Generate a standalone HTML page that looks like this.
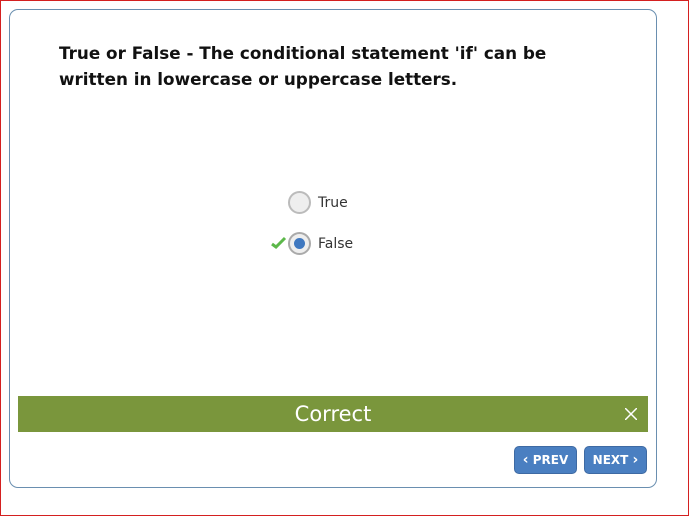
<!DOCTYPE html>
<html><head><style>
body{margin:0;width:689px;height:516px;background:#fff;position:relative;overflow:hidden;font-family:"Liberation Sans","DejaVu Sans",sans-serif}
.frame{position:absolute;left:0;top:0;width:687px;height:514px;border:1px solid #d42020}
.card{position:absolute;left:9px;top:9px;width:646px;height:477px;border:1px solid #6a8fb0;border-radius:9px}
.q{position:absolute;left:59px;top:40px;font-weight:bold;font-size:16.8px;line-height:26px;color:#111;font-family:"DejaVu Sans",sans-serif;letter-spacing:0}
.opt{position:absolute;left:288px;font-size:14px;color:#333;font-family:"DejaVu Sans",sans-serif}
.r{position:absolute;left:0;top:0;width:23px;height:23px;border-radius:50%;border:2px solid #bbb;background:#eee;box-sizing:border-box}
.bar{position:absolute;left:18px;top:396px;width:630px;height:36px;background:#7a963c;color:#fff;font-size:21px;text-align:center;line-height:36px;font-family:"DejaVu Sans",sans-serif}
.btn{position:absolute;top:446px;height:28px;width:63px;background:#4a7fc1;border:1px solid #3e6aa3;border-radius:5px;box-sizing:border-box;color:#fff;font-weight:bold;font-size:12px;line-height:26px;text-align:center;font-family:"DejaVu Sans",sans-serif}
</style></head><body>
<div class="frame"></div>
<div class="card"></div>
<div class="q">True or False - The conditional statement 'if' can be<br>written in lowercase or uppercase letters.</div>
<div class="opt" style="top:191px"><div class="r"></div><span style="position:absolute;left:30px;top:4px">True</span></div>
<div class="opt" style="top:232px"><div class="r" style="border-color:#aaa"><div style="position:absolute;left:4px;top:4px;width:11px;height:11px;border-radius:50%;background:#3f78c0"></div></div><span style="position:absolute;left:30px;top:4px">False</span></div>
<svg style="position:absolute;left:271px;top:236px" width="16" height="13"><path d="M1 8 L5 11 L14 2" stroke="#5cb84a" stroke-width="3" fill="none"/></svg>
<div class="bar">Correct<svg style="position:absolute;right:11px;top:12px" width="12" height="12"><path d="M0 0L12 12M12 0L0 12" stroke="#fff" stroke-width="1.5"/></svg></div>
<div class="btn" style="left:514px"><b style="font-size:14px">‹</b> PREV</div>
<div class="btn" style="left:584px">NEXT <b style="font-size:14px">›</b></div>
</body></html>
